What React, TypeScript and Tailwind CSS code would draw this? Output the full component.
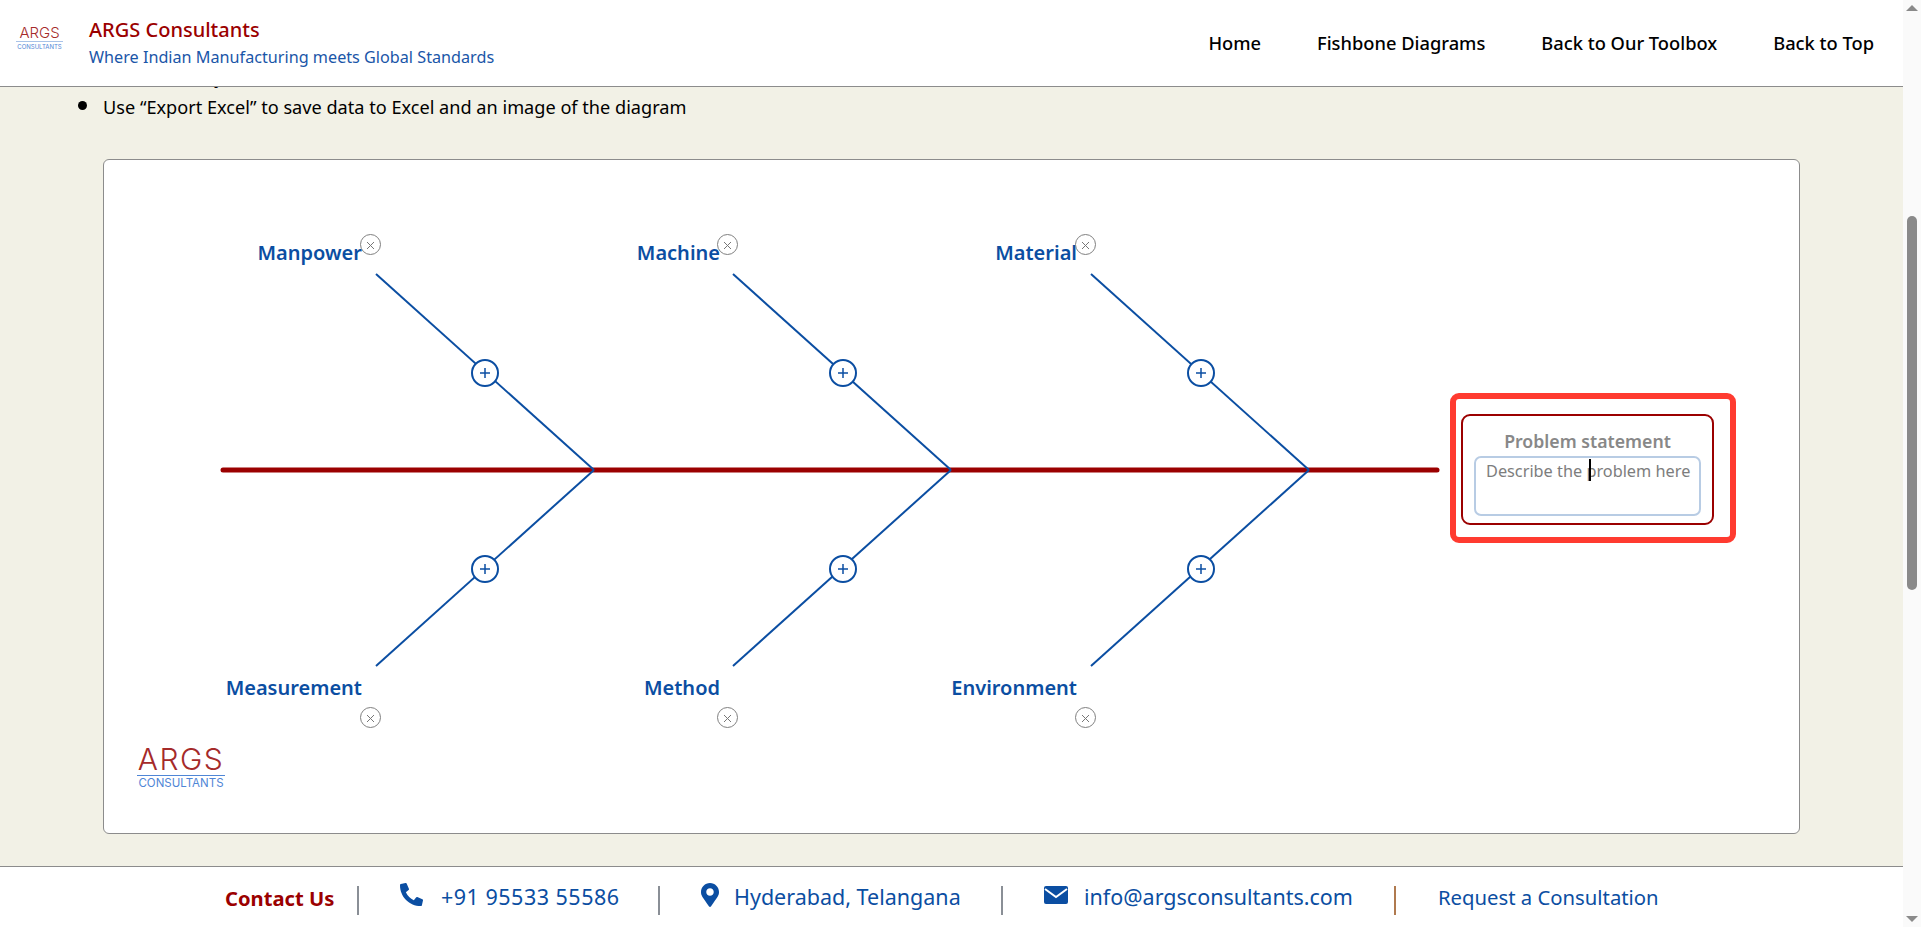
import { FaMapMarkerAlt, FaPhoneAlt } from "react-icons/fa";

const navLinks = ["Home", "Fishbone Diagrams", "Back to Our Toolbox", "Back to Top"];

// line ends are in card coordinates (card padding box starts at 104,160 on the page)
const bones = [
  { x1: 272, y1: 114, x2: 490, y2: 310 },
  { x1: 629, y1: 114, x2: 847, y2: 310 },
  { x1: 987, y1: 114, x2: 1205, y2: 310 },
  { x1: 272, y1: 506, x2: 490, y2: 310 },
  { x1: 629, y1: 506, x2: 847, y2: 310 },
  { x1: 987, y1: 506, x2: 1205, y2: 310 },
];

const plusButtons = [
  "left-[367px] top-[199px]",
  "left-[725px] top-[199px]",
  "left-[1083px] top-[199px]",
  "left-[367px] top-[395px]",
  "left-[725px] top-[395px]",
  "left-[1083px] top-[395px]",
];

const removeButtons = [
  "left-[256px] top-[74px]",
  "left-[613px] top-[74px]",
  "left-[971px] top-[74px]",
  "left-[256px] top-[547px]",
  "left-[613px] top-[547px]",
  "left-[971px] top-[547px]",
];

const labels = [
  { text: "Manpower", pos: "right-[1437px] top-[78px]" },
  { text: "Machine", pos: "right-[1079px] top-[78px]" },
  { text: "Material", pos: "right-[722px] top-[78px]" },
  { text: "Measurement", pos: "right-[1437px] top-[513px]" },
  { text: "Method", pos: "right-[1079px] top-[513px]" },
  { text: "Environment", pos: "right-[722px] top-[513px]" },
];

function Logo() {
  return (
    <div className="flex flex-col items-center w-[88px] font-['Inter',sans-serif]">
      <span className="text-[30px] leading-[26px] font-light tracking-[1.5px] text-[#a52a2a]">ARGS</span>
      <span className="w-full border-t border-[#4f86d6] mt-[3px] text-center text-[11.5px] leading-[15px] text-[#4f86d6]">
        CONSULTANTS
      </span>
    </div>
  );
}

function Separator({ className = "bg-[#8a8f96]" }: { className?: string }) {
  return <span className={`w-[2px] h-[29px] mt-[4px] ${className}`} />;
}

function Scrollbar() {
  return (
    <div className="w-[18px] h-full bg-[#fafafa] flex flex-col items-center relative">
      <div className="mt-[5px] w-0 h-0 border-x-[6px] border-x-transparent border-b-[6px] border-b-[#8a8a8a]" />
      <div className="mt-[205px] w-[10px] h-[374px] rounded-[5px] bg-[#8a8a8a]" />
      <div className="mt-auto mb-[5px] w-0 h-0 border-x-[6px] border-x-transparent border-t-[6px] border-t-[#8a8a8a]" />
    </div>
  );
}

export default function App() {
  return (
    <div className="flex w-full h-[927px] overflow-hidden font-['Noto_Sans',sans-serif] bg-white">
      <div className="flex-1 min-w-0 flex flex-col">
        <header className="relative z-10 h-[87px] shrink-0 bg-white border-b border-[#8c8c8c] flex items-center pl-[16px] pr-[29px]">
          <div className="flex flex-col items-center w-[47px] font-['Inter',sans-serif] -mt-[9px]">
            <span className="text-[15px] leading-[13px] font-light text-[#a52a2a]">ARGS</span>
            <span className="w-full border-t border-[#a9c3e8] mt-[2px] text-center text-[6px] leading-[9px] text-[#4f86d6]">
              CONSULTANTS
            </span>
          </div>
          <div className="ml-[26px] flex flex-col mt-[1px]">
            <span className="text-[20px] leading-[26px] font-medium text-[#9b0000]">ARGS Consultants</span>
            <span className="text-[16.2px] leading-[26px] mt-[1px] text-[#1a56a8]">
              Where Indian Manufacturing meets Global Standards
            </span>
          </div>
          <nav className="ml-auto flex items-center gap-[56px]">
            {navLinks.map((link) => (
              <a key={link} className="text-[18.3px] font-medium text-black">
                {link}
              </a>
            ))}
          </nav>
        </header>

        <main className="flex-1 min-h-0 overflow-hidden bg-[#f2f1e6] px-[103px]">
          <ul className="list-disc -mt-[28px] text-[18.15px] leading-[30px] text-black marker:text-[26px]">
            <li className="h-[30px]">Edit a bone by hand</li>
            <li className="h-[30px]">Use “Export Excel” to save data to Excel and an image of the diagram</li>
          </ul>

          <section className="relative mt-[40px] h-[675px] bg-white border border-[#8c8c8c] rounded-[6px]">
            <svg className="absolute inset-0 w-full h-full" viewBox="0 0 1695 673" fill="none">
              <line x1="119" y1="310" x2="1333" y2="310" stroke="#9b0000" strokeWidth="5" strokeLinecap="round" />
              {bones.map((b, i) => (
                <line key={i} {...b} stroke="#0b4ea2" strokeWidth="2" />
              ))}
            </svg>

            {labels.map((l) => (
              <span key={l.text} className={`absolute ${l.pos} text-[20px] leading-[30px] font-semibold text-[#0b4ea2]`}>
                {l.text}
              </span>
            ))}

            {removeButtons.map((pos) => (
              <span
                key={pos}
                className={`absolute ${pos} w-[21px] h-[21px] rounded-full border border-[#808080] bg-white flex items-center justify-center`}
              >
                <svg width="9" height="9" viewBox="0 0 9 9" className="mt-[2px]">
                  <path d="M1 1l7 7M8 1l-7 7" stroke="#777" strokeWidth="1" />
                </svg>
              </span>
            ))}

            {plusButtons.map((pos) => (
              <span
                key={pos}
                className={`absolute ${pos} w-[28px] h-[28px] rounded-full border-2 border-[#0b4ea2] bg-white flex items-center justify-center`}
              >
                <svg width="10" height="10" viewBox="0 0 10 10">
                  <path d="M5 0v10M0 5h10" stroke="#0b4ea2" strokeWidth="1.5" />
                </svg>
              </span>
            ))}

            {/* problem statement, with the red highlight round it */}
            <div className="absolute left-[1346px] top-[233px] w-[286px] h-[150px] border-[6px] border-[#ff3b30] rounded-[9px]">
              <div className="mx-[5px] mt-[15px] h-[111px] w-[253px] border-2 border-[#9b0000] rounded-[9px] flex flex-col items-center px-[10px]">
                <span className="mt-[13px] text-[17.7px] leading-[24px] font-semibold text-[#888888] whitespace-nowrap">
                  Problem statement
                </span>
                <div className="relative w-[227px] h-[60px] mt-[3px] border-2 border-[#b8cce4] rounded-[7px] px-[10px] text-[16.3px] leading-[26px] text-[#7d7d7d] whitespace-nowrap">
                  Describe the problem here
                  <span className="absolute left-[113px] top-[1px] w-[2px] h-[22px] bg-black" />
                </div>
              </div>
            </div>

            <div className="absolute left-[33px] bottom-[42px]">
              <Logo />
            </div>
          </section>
        </main>

        <footer className="h-[61px] shrink-0 bg-white border-t border-[#8c8c8c] flex items-start pl-[225px] pt-[15px] text-[21.5px] leading-[30px] text-[#0b4ea2]">
          <strong className="mt-[1px] w-[132px] text-[20.2px] font-bold text-[#9b0000]">Contact Us</strong>
          <Separator />
          <span className="ml-[41px] mt-[1px] w-[41px] h-[28px]">
            <FaPhoneAlt size={23} />
          </span>
          <span className="w-[217px] tracking-[0.5px]">+91 95533 55586</span>
          <Separator />
          <span className="ml-[41px] mt-[1px] w-[33px]">
            <FaMapMarkerAlt size={24} className="-ml-[3px]" />
          </span>
          <span className="w-[267px]">Hyderabad, Telangana</span>
          <Separator />
          <svg width="24" height="18" viewBox="0 0 24 18" className="ml-[41px] mt-[4px] mr-[16px]">
            <rect width="24" height="18" rx="2" fill="#0b4ea2" />
            <path d="M1 3l11 8 11-8" stroke="#fff" strokeWidth="2" fill="none" />
          </svg>
          <span className="w-[310px]">info@argsconsultants.com</span>
          <Separator className="bg-[#b07a4f]" />
          <span className="ml-[42px] text-[20.3px]">Request a Consultation</span>
        </footer>
      </div>
      <Scrollbar />
    </div>
  );
}
